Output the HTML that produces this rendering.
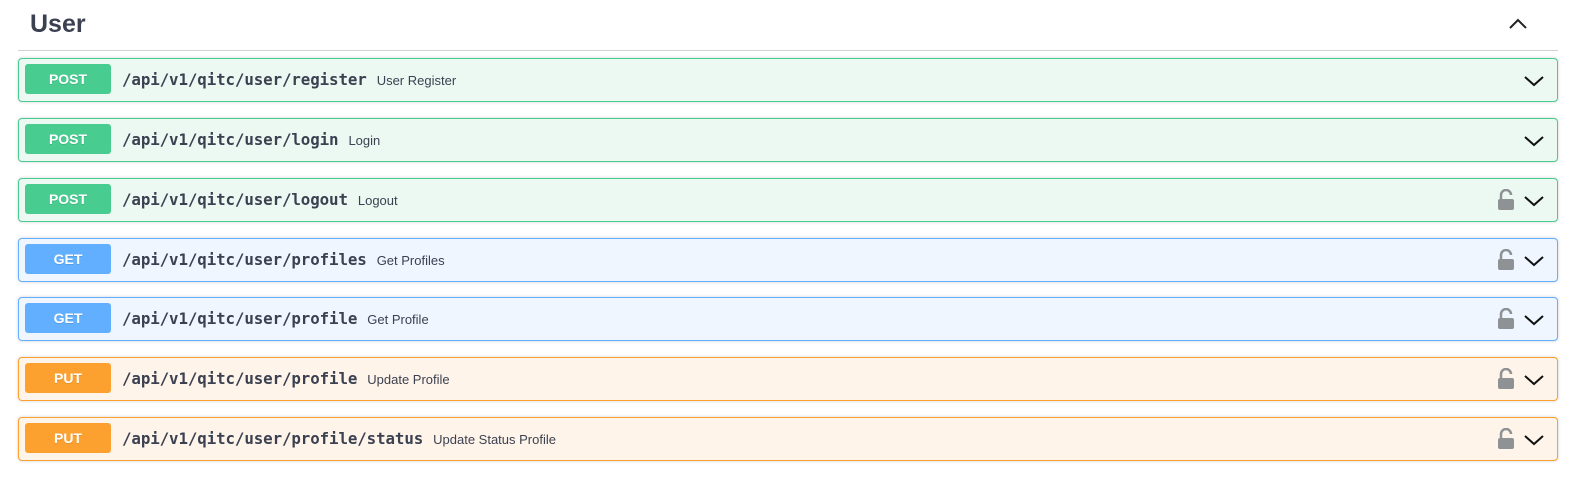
<!DOCTYPE html>
<html><head><style>
body{margin:0;background:#fff;font-family:"Liberation Sans",sans-serif;width:1591px;height:486px;overflow:hidden;position:relative}
.h{position:absolute;left:30px;top:10px;font-size:25px;font-weight:bold;color:#3b4151}
.line{position:absolute;left:18px;top:50px;width:1540px;height:1px;background:#d0d2d6}
.up{position:absolute;left:1508px;top:14px}
.op{position:absolute;left:18px;width:1538px;height:42px;border:1px solid;border-radius:4px;box-shadow:0 0 3px rgba(0,0,0,.19)}
.b{position:absolute;left:6px;top:5px;width:86px;height:30px;border-radius:3px;color:#fff;font-weight:bold;font-size:14px;text-align:center;line-height:30px;text-shadow:0 1px 0 rgba(0,0,0,.1)}
.p{position:absolute;left:103px;top:11px;font-family:"DejaVu Sans Mono","Liberation Mono",monospace;font-weight:bold;font-size:15.8px;color:#3b4151;letter-spacing:-0.1px}
.p span{font-family:"Liberation Sans",sans-serif;font-weight:normal;font-size:13px;margin-left:10px;letter-spacing:0}
.post{border-color:#49cc90;background:#ebf9f2}.post .b{background:#49cc90}
.get{border-color:#61affe;background:#eff6ff}.get .b{background:#61affe}
.put{border-color:#fca130;background:#fff4e9}.put .b{background:#fca130}
.ch{position:absolute;left:1504px;top:12px}
.lk{position:absolute;left:1478px;top:10px}
</style></head><body>
<div class="h">User</div>
<svg class="up" width="20" height="20" viewBox="0 0 20 20"><path d="M2 14 L10 6 L18 14" fill="none" stroke="#222" stroke-width="2"/></svg>
<div class="line"></div>

<div class="op post" style="top:58px"><div class="b">POST</div><div class="p">/api/v1/qitc/user/register<span>User Register</span></div><svg class="ch" width="22" height="20" viewBox="0 0 22 20"><path d="M2 6 L11 14 L20 6" fill="none" stroke="#111" stroke-width="2"/></svg></div>

<div class="op post" style="top:118px"><div class="b">POST</div><div class="p">/api/v1/qitc/user/login<span>Login</span></div><svg class="ch" width="22" height="20" viewBox="0 0 22 20"><path d="M2 6 L11 14 L20 6" fill="none" stroke="#111" stroke-width="2"/></svg></div>

<div class="op post" style="top:178px"><div class="b">POST</div><div class="p">/api/v1/qitc/user/logout<span>Logout</span></div><svg class="lk" width="18" height="22" viewBox="0 0 18 22"><path d="M4 10 V6 a5 5 0 0 1 10 0" fill="none" stroke="#8f9294" stroke-width="2.5"/><rect x="1" y="10" width="16" height="11" rx="2" fill="#8f9294"/></svg><svg class="ch" width="22" height="20" viewBox="0 0 22 20"><path d="M2 6 L11 14 L20 6" fill="none" stroke="#111" stroke-width="2"/></svg></div>

<div class="op get" style="top:238px"><div class="b">GET</div><div class="p">/api/v1/qitc/user/profiles<span>Get Profiles</span></div><svg class="lk" width="18" height="22" viewBox="0 0 18 22"><path d="M4 10 V6 a5 5 0 0 1 10 0" fill="none" stroke="#8f9294" stroke-width="2.5"/><rect x="1" y="10" width="16" height="11" rx="2" fill="#8f9294"/></svg><svg class="ch" width="22" height="20" viewBox="0 0 22 20"><path d="M2 6 L11 14 L20 6" fill="none" stroke="#111" stroke-width="2"/></svg></div>

<div class="op get" style="top:297px"><div class="b">GET</div><div class="p">/api/v1/qitc/user/profile<span>Get Profile</span></div><svg class="lk" width="18" height="22" viewBox="0 0 18 22"><path d="M4 10 V6 a5 5 0 0 1 10 0" fill="none" stroke="#8f9294" stroke-width="2.5"/><rect x="1" y="10" width="16" height="11" rx="2" fill="#8f9294"/></svg><svg class="ch" width="22" height="20" viewBox="0 0 22 20"><path d="M2 6 L11 14 L20 6" fill="none" stroke="#111" stroke-width="2"/></svg></div>

<div class="op put" style="top:357px"><div class="b">PUT</div><div class="p">/api/v1/qitc/user/profile<span>Update Profile</span></div><svg class="lk" width="18" height="22" viewBox="0 0 18 22"><path d="M4 10 V6 a5 5 0 0 1 10 0" fill="none" stroke="#8f9294" stroke-width="2.5"/><rect x="1" y="10" width="16" height="11" rx="2" fill="#8f9294"/></svg><svg class="ch" width="22" height="20" viewBox="0 0 22 20"><path d="M2 6 L11 14 L20 6" fill="none" stroke="#111" stroke-width="2"/></svg></div>

<div class="op put" style="top:417px"><div class="b">PUT</div><div class="p">/api/v1/qitc/user/profile/status<span>Update Status Profile</span></div><svg class="lk" width="18" height="22" viewBox="0 0 18 22"><path d="M4 10 V6 a5 5 0 0 1 10 0" fill="none" stroke="#8f9294" stroke-width="2.5"/><rect x="1" y="10" width="16" height="11" rx="2" fill="#8f9294"/></svg><svg class="ch" width="22" height="20" viewBox="0 0 22 20"><path d="M2 6 L11 14 L20 6" fill="none" stroke="#111" stroke-width="2"/></svg></div>
</body></html>
